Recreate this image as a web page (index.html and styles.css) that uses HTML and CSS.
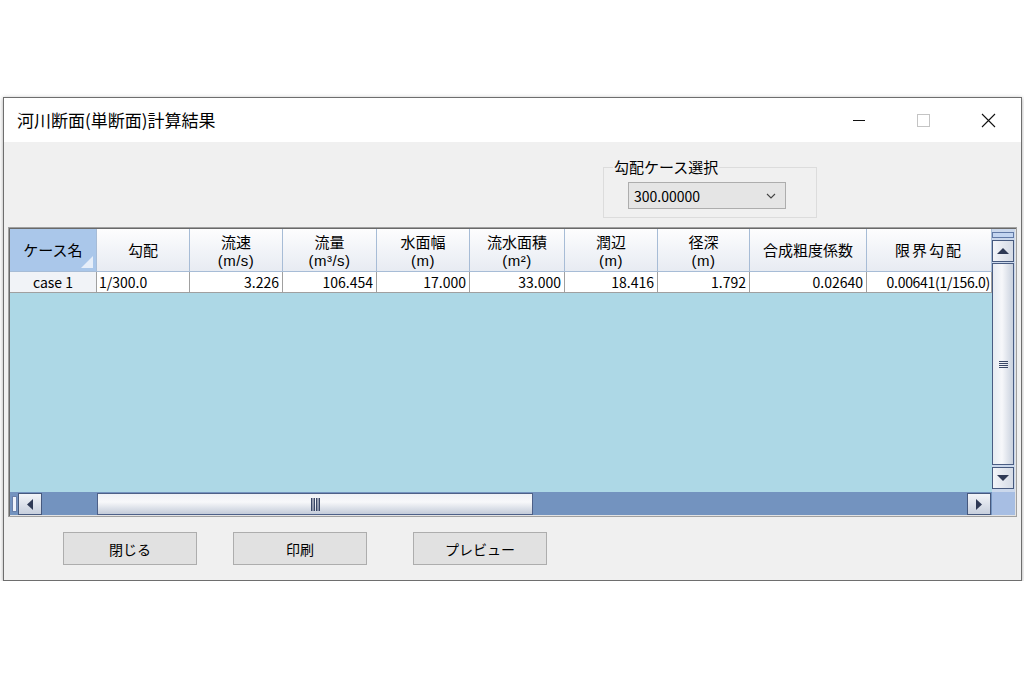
FILE: index.html
```html
<!DOCTYPE html>
<html lang="ja">
<head>
<meta charset="utf-8">
<title>河川断面(単断面)計算結果</title>
<link rel="stylesheet" href="styles.css">
</head>
<body>
<div class="window">
  <div class="titlebar">
    <div class="title">河川断面(単断面)計算結果</div>
    <div class="caption">
      <div class="cap-btn"><svg width="12" height="1" viewBox="0 0 12 1"><rect width="12" height="1" fill="#111"/></svg></div>
      <div class="cap-btn"><svg width="13" height="13" viewBox="0 0 13 13"><rect x="0.5" y="0.5" width="12" height="12" fill="none" stroke="#c4c4c4"/></svg></div>
      <div class="cap-btn"><svg width="15" height="15" viewBox="0 0 15 15"><path d="M1 1L14 14M14 1L1 14" stroke="#111" stroke-width="1.1"/></svg></div>
    </div>
  </div>
  <div class="client">
    <div class="top">
      <fieldset class="group">
        <legend>勾配ケース選択</legend>
        <div class="group-body">
          <div class="combo"><span>300.00000</span><svg width="10" height="6" viewBox="0 0 10 6"><path d="M1 1l4 4 4-4" fill="none" stroke="#444" stroke-width="1.1"/></svg></div>
        </div>
      </fieldset>
    </div>
    <div class="grid">
      <div class="table">
        <div class="cols hdr">
          <div class="hc sel">ケース名</div>
          <div class="hc">勾配</div>
          <div class="hc two"><span class="name">流速</span><span class="unit">(m/s)</span></div>
          <div class="hc two"><span class="name">流量</span><span class="unit">(m³/s)</span></div>
          <div class="hc two"><span class="name">水面幅</span><span class="unit">(m)</span></div>
          <div class="hc two"><span class="name">流水面積</span><span class="unit">(m²)</span></div>
          <div class="hc two"><span class="name">潤辺</span><span class="unit">(m)</span></div>
          <div class="hc two"><span class="name">径深</span><span class="unit">(m)</span></div>
          <div class="hc">合成粗度係数</div>
          <div class="hc wide">限界勾配</div>
        </div>
        <div class="cols data">
          <div class="dc rh">case 1</div>
          <div class="dc left">1/300.0</div>
          <div class="dc">3.226</div>
          <div class="dc">106.454</div>
          <div class="dc">17.000</div>
          <div class="dc">33.000</div>
          <div class="dc">18.416</div>
          <div class="dc">1.792</div>
          <div class="dc">0.02640</div>
          <div class="dc tight">0.00641(1/156.0)</div>
        </div>
        <div class="empty"></div>
      </div>
      <div class="vscroll">
        <div class="vsplit"></div>
        <div class="sbtn vbtn"><svg width="12" height="6" viewBox="0 0 12 6"><path d="M0 6L6 0L12 6Z" fill="#2e3955"/></svg></div>
        <div class="vthumb"><svg width="9" height="7" viewBox="0 0 9 7"><path d="M0 0.5H9M0 2.5H9M0 4.5H9M0 6.5H9" stroke="#3a4766"/></svg></div>
        <div class="sbtn vbtn"><svg width="12" height="6" viewBox="0 0 12 6"><path d="M0 0L12 0L6 6Z" fill="#2e3955"/></svg></div>
      </div>
      <div class="hscroll">
        <div class="hsplit"></div>
        <div class="sbtn hbtn"><svg width="6" height="11" viewBox="0 0 6 11"><path d="M6 0L0 5.5L6 11Z" fill="#2e3955"/></svg></div>
        <div class="htrack"></div>
        <div class="hthumb"><svg width="9" height="13" viewBox="0 0 9 13"><path d="M0.75 0V13M3.25 0V13M5.75 0V13M8.25 0V13" stroke="#3a4766" stroke-width="1.5"/></svg></div>
        <div class="hfill"></div>
        <div class="sbtn hbtn hright"><svg width="6" height="11" viewBox="0 0 6 11"><path d="M0 0L6 5.5L0 11Z" fill="#2e3955"/></svg></div>
      </div>
      <div class="corner"></div>
    </div>
    <div class="buttons">
      <button class="btn">閉じる</button>
      <button class="btn btn-print">印刷</button>
      <button class="btn btn-preview">プレビュー</button>
    </div>
  </div>
</div>
</body>
</html>
```
FILE: styles.css
```css
body {
  margin: 0;
  background: #ffffff;
  font-family: "Noto Sans CJK JP", "Noto Sans", sans-serif;
  color: #000;
}

.window {
  margin: 97px 0 0 3px;
  width: 1019px;
  height: 484px;
  box-sizing: border-box;
  border: 1px solid #6e6e6e;
  box-shadow: 0 1px 4px rgba(0, 0, 0, 0.35);
  background: #f0f0f0;
  display: flex;
  flex-direction: column;
}

.titlebar {
  height: 44px;
  flex: none;
  background: #ffffff;
  display: flex;
  align-items: center;
}

.title {
  flex: 1;
  padding-left: 13px;
  font-size: 17px;
  line-height: 20px;
}

.caption {
  display: flex;
  align-self: stretch;
}

.cap-btn {
  width: 65px;
  display: flex;
  align-items: center;
  justify-content: center;
}

.client {
  flex: 1;
  display: flex;
  flex-direction: column;
}

.top {
  height: 85px;
  flex: none;
  box-sizing: border-box;
  padding: 16px 0 0 599px;
}

.group {
  margin: 0;
  padding: 0;
  width: 214px;
  box-sizing: border-box;
  border: 1px solid #dcdcdc;
  min-width: 0;
}

.group legend {
  margin-left: 9px;
  padding: 0 1px;
  font-size: 15px;
  line-height: 18px;
}

.group-body {
  padding: 6px 30px 8px 24px;
}

.combo {
  height: 27px;
  box-sizing: border-box;
  border: 1px solid #adadad;
  background: #e5e5e5;
  display: flex;
  align-items: center;
  justify-content: space-between;
  padding: 0 9px 0 5px;
  font-size: 14px;
}

.grid {
  margin-left: 4px;
  width: 1009px;
  height: 290px;
  box-sizing: border-box;
  border: 1px solid #a0a0a0;
  box-shadow: inset 1px 1px 0 #696969, inset -1px -1px 0 #e3e3e3;
  padding: 1px;
  display: grid;
  grid-template-columns: 982px 23px;
  grid-template-rows: 263px 23px;
  flex: none;
}

.table {
  background: #add8e6;
  display: flex;
  flex-direction: column;
  overflow: hidden;
}

.cols {
  display: grid;
  grid-template-columns: 87px 93px 93px 94px 93px 95px 93px 92px 117px 125px;
}

.hdr {
  height: 43px;
}

.hc {
  box-sizing: border-box;
  border-right: 1px solid #a7bcd6;
  border-bottom: 1px solid #a7bcd6;
  background: linear-gradient(#fdfdfe, #e7ebf2);
  display: flex;
  flex-direction: column;
  align-items: center;
  justify-content: center;
  font-size: 15px;
  line-height: 18px;
  white-space: nowrap;
}

.hc.two {
  line-height: normal;
  padding-bottom: 1px;
}

.hc .name {
  font-size: 15px;
  line-height: normal;
}

.hc .unit {
  font-family: "Liberation Sans", "Noto Sans", sans-serif;
  font-size: 15px;
  letter-spacing: 0.5px;
  line-height: normal;
}

.hc.wide {
  letter-spacing: 2px;
}

.hc.sel {
  background: #aac7ea;
  position: relative;
}

.hc.sel::after {
  content: "";
  position: absolute;
  right: 3px;
  bottom: 3px;
  width: 0;
  height: 0;
  border-left: 12px solid transparent;
  border-bottom: 12px solid #e6eef9;
}

.data {
  height: 21px;
}

.dc {
  box-sizing: border-box;
  background: #ffffff;
  border-right: 1px solid #a0a0a0;
  border-bottom: 1px solid #a0a0a0;
  font-size: 14px;
  line-height: 20px;
  padding: 0 3px;
  text-align: right;
  white-space: nowrap;
  overflow: hidden;
}

.dc.rh {
  background: #f1f3f7;
  text-align: center;
}

.dc.left {
  text-align: left;
  padding-left: 2px;
}

.dc.tight {
  padding: 0 1px;
  letter-spacing: -0.3px;
}

.empty {
  flex: 1;
}

.vscroll {
  background: #cbd8ec;
  display: flex;
  flex-direction: column;
  align-items: stretch;
  padding: 3px 1px 3px 0;
}

.vsplit {
  height: 6px;
  box-sizing: border-box;
  border: 1px solid #6179a6;
  background: #c3d5f0;
  margin-bottom: 2px;
}

.sbtn {
  box-sizing: border-box;
  border: 1px solid #46597e;
  display: flex;
  align-items: center;
  justify-content: center;
}

.vbtn {
  height: 22px;
  background: linear-gradient(to right, #f3f5f9, #d5dbe6);
}

.vthumb {
  flex: 1;
  margin: 1px 0 2px;
  box-sizing: border-box;
  border: 1px solid #4a5d83;
  background: linear-gradient(to right, #e7ebf2, #f6f7fa 45%, #c9d1de);
  display: flex;
  align-items: center;
  justify-content: center;
}

.hscroll {
  background: #7393bf;
  display: flex;
  align-items: stretch;
  padding: 1px 0 0;
}

.hsplit {
  width: 5px;
  margin: 3px 0 3px 2px;
  box-sizing: border-box;
  border: 1px solid #6a80aa;
  background: #eef3fb;
}

.hbtn {
  width: 24px;
  margin-left: 1px;
  background: linear-gradient(#f3f5f9, #c7cfdd);
}

.hbtn.hright {
  margin: 0 1px 0 0;
}

.htrack {
  width: 55px;
}

.hthumb {
  width: 436px;
  box-sizing: border-box;
  border: 1px solid #4d6088;
  background: linear-gradient(#eef1f6, #f7f8fa 40%, #c3cbd9);
  display: flex;
  align-items: center;
  justify-content: center;
}

.hfill {
  flex: 1;
}

.corner {
  background: #a7bee3;
}

.buttons {
  display: flex;
  padding: 15px 0 0 59px;
}

.btn {
  width: 134px;
  height: 33px;
  box-sizing: border-box;
  border: 1px solid #adadad;
  background: #e1e1e1;
  font-family: inherit;
  font-size: 14px;
  color: #000;
  padding: 0;
  margin: 0;
}

.btn-print {
  margin-left: 36px;
}

.btn-preview {
  margin-left: 46px;
}
```
